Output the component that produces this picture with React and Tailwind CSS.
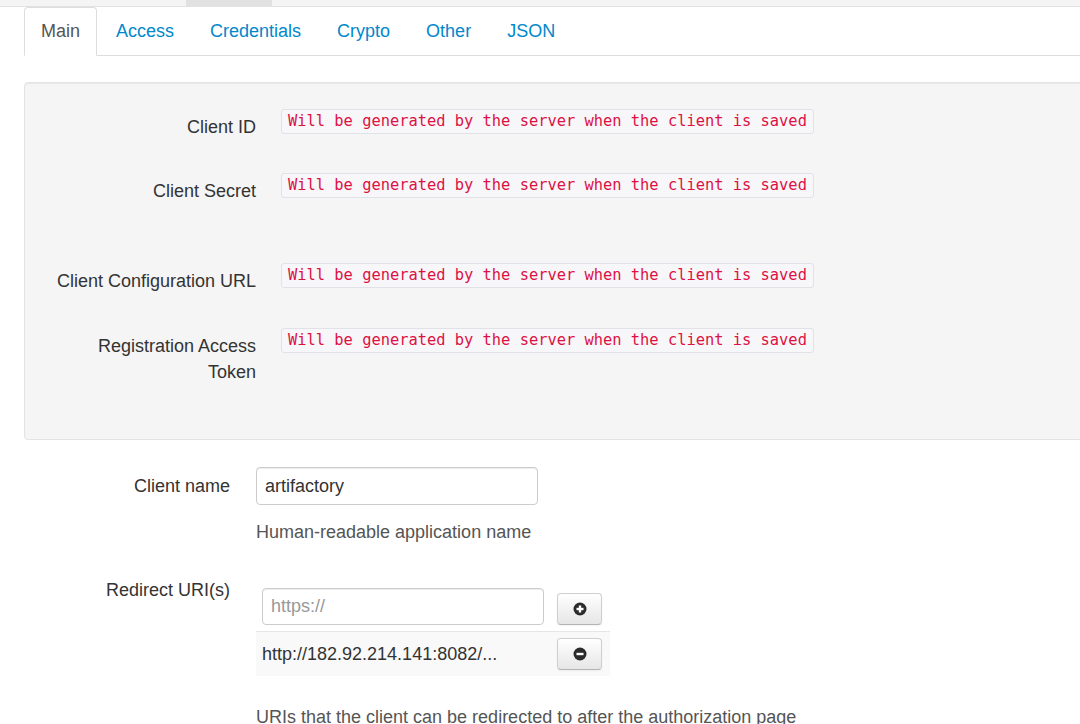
import React from "react";

const tabs = ["Main", "Access", "Credentials", "Crypto", "Other", "JSON"];

const generated = "Will be generated by the server when the client is saved";

const CodeBox = () => (
  <code className="flex items-center h-[25px] px-[6px] border border-[#e1e1e8] bg-[#f7f7f9] rounded-[3px] text-[#dd1144] text-[15.4px] whitespace-nowrap [font-family:'DejaVu_Sans_Mono',monospace]">
    {generated}
  </code>
);

const WellRow = ({ label, className = "" }) => (
  <div className={"flex items-start " + className}>
    <div className="w-[231px] shrink-0 text-right pt-[5px] leading-[26px]">{label}</div>
    <div className="ml-[25px] flex">
      <CodeBox />
    </div>
  </div>
);

const CircleIcon = ({ minus }) => (
  <svg width="14" height="14" viewBox="0 0 14 14">
    <circle cx="7" cy="7" r="6.5" fill="#2b2b2b" />
    <rect x="3.5" y="5.8" width="7" height="2.4" fill="#fff" />
    {!minus && <rect x="5.8" y="3.5" width="2.4" height="7" fill="#fff" />}
  </svg>
);

const Btn = ({ minus }) => (
  <button className="w-[45px] h-[32px] flex items-center justify-center rounded-[4px] border border-[#cfcfcf] border-b-[#b3b3b3] bg-gradient-to-b from-white to-[#e6e6e6] shadow-[inset_0_1px_0_rgba(255,255,255,0.2),0_1px_2px_rgba(0,0,0,0.05)]">
    <CircleIcon minus={minus} />
  </button>
);

export default function App() {
  return (
    <div className="w-[1080px] h-[724px] overflow-hidden bg-white text-[#333] text-[18px] [font-family:'Liberation_Sans',Arial,sans-serif]">
      {/* strip left from the page above */}
      <div className="flex h-[7px] bg-[#f4f4f4] border-b border-[#e2e2e2]">
        <div className="w-[186px]" />
        <div className="w-[86px] bg-[#e1e1e1]" />
      </div>

      <div className="pl-[24px]">
        {/* tabs */}
        <ul className="flex border-b border-[#ddd]">
          {tabs.map((t, i) => (
            <li
              key={t}
              className={
                "-mb-px mr-[2px] px-[16px] pt-[10px] pb-[11px] leading-[26px] border rounded-t-[4px] " +
                (i === 0
                  ? "border-[#ddd] border-b-white bg-white text-[#555]"
                  : "border-transparent text-[#0088cc]")
              }
            >
              {t}
            </li>
          ))}
        </ul>

        {/* generated values */}
        <div className="mt-[26px] -mr-[20px] border border-[#e3e3e3] bg-[#f5f5f5] rounded-[4px] shadow-[inset_0_1px_1px_rgba(0,0,0,0.05)] pt-[26px] pb-[54px]">
          <WellRow label="Client ID" />
          <WellRow label="Client Secret" className="mt-[33px]" />
          <WellRow label="Client Configuration URL" className="mt-[59px]" />
          <WellRow
            label={
              <>
                Registration Access
                <br />
                Token
              </>
            }
            className="mt-[34px]"
          />
        </div>

        {/* client name */}
        <div className="flex items-start mt-[27px]">
          <div className="w-[206px] shrink-0 text-right pt-[6px] leading-[26px]">Client name</div>
          <div className="ml-[26px]">
            <div className="w-[282px] h-[38px] flex items-center px-[8px] border border-[#ccc] rounded-[4px] bg-white shadow-[inset_0_1px_1px_rgba(0,0,0,0.075)]">
              artifactory
            </div>
            <div className="mt-[14px] leading-[26px] text-[#555]">Human-readable application name</div>
          </div>
        </div>

        {/* redirect uris */}
        <div className="flex items-start mt-[32px]">
          <div className="w-[206px] shrink-0 text-right leading-[26px]">Redirect URI(s)</div>
          <div className="ml-[26px]">
            <div className="mt-[5px] w-[354px]">
              <div className="flex items-start">
                <div className="p-[6px]">
                  <div className="w-[282px] h-[37px] flex items-center px-[8px] border border-[#ccc] rounded-[4px] bg-white text-[#999] shadow-[inset_0_1px_1px_rgba(0,0,0,0.075)]">
                    https://
                  </div>
                </div>
                <div className="pl-[7px] pt-[11px]">
                  <Btn />
                </div>
              </div>
              <div className="flex items-center border-t border-[#e6e6e6] bg-[#f9f9f9] h-[45px]">
                <div className="w-[295px] pl-[6px]">http://182.92.214.141:8082/...</div>
                <div className="pl-[6px]">
                  <Btn minus />
                </div>
              </div>
            </div>
            <div className="mt-[28px] leading-[26px] text-[#555] whitespace-nowrap">
              URIs that the client can be redirected to after the authorization page
            </div>
          </div>
        </div>
      </div>
    </div>
  );
}
